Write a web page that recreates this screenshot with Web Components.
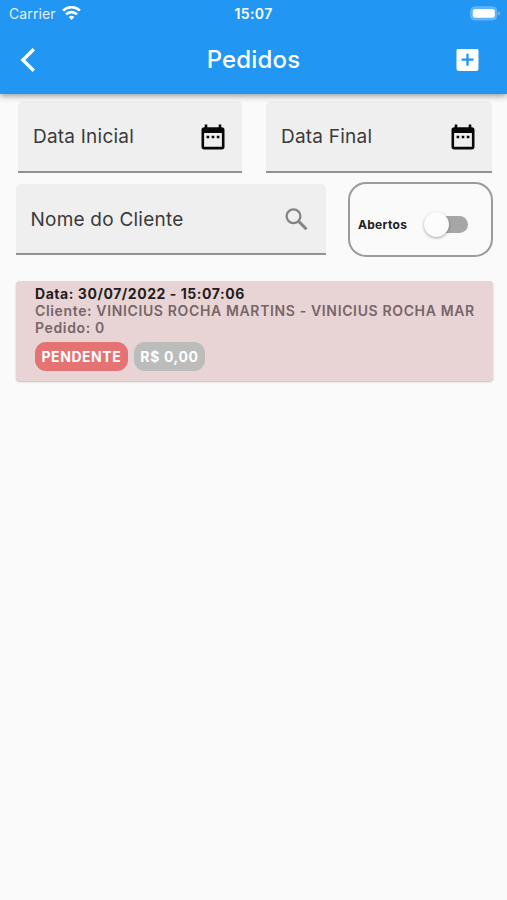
<!DOCTYPE html>
<html lang="pt-BR">
<head>
<meta charset="utf-8">
<title>Pedidos</title>
<style>
html, body { margin: 0; height: 100%; background: #fafafa; overflow: hidden; }
body { font-family: Inter, "Liberation Sans", sans-serif; color: #3a3a3a; }
</style>
</head>
<body>
<orders-page></orders-page>
<script>
const define = (name, html) => customElements.define(name, class extends HTMLElement {
  constructor() {
    super();
    this.attachShadow({ mode: 'open' }).innerHTML = html;
  }
});

define('status-bar', `
<style>
:host { display: grid; grid-template-columns: 1fr auto 1fr; align-items: center; height: 27px; padding: 0 7px 0 9px; box-sizing: border-box; color: #fff; }
.left { display: flex; align-items: center; gap: 6px; font-size: 14px; line-height: 27px; color: #e2f2ff; }
.carrier { letter-spacing: 0.12px; }
.time { font-size: 14px; font-weight: 600; letter-spacing: 0.4px; line-height: 27px; margin-right: 2px; }
.battery { justify-self: end; }
svg { display: block; }
</style>
<div class="left"><span class="carrier">Carrier</span>
<svg width="19" height="15" viewBox="0 0 19 15" fill="none" stroke="#fff" stroke-width="2.700"><path d="M1.100 4.600a12 12 0 0 1 16.800 0"/><path d="M4 8.400a7.800 7.800 0 0 1 11 0"/><path d="M9.500 14 6.600 11.100a4.100 4.100 0 0 1 5.800 0Z" fill="#fff" stroke="none"/></svg></div>
<span class="time">15:07</span>
<svg class="battery" width="30" height="15" viewBox="0 0 30 15"><rect x=".7" y=".9" width="26" height="13" rx="4" fill="#5db1f8" stroke="#6fbaf9"/><rect x="2.800" y="3" width="22" height="8.800" rx="2" fill="#fff"/><path d="M28.200 5.400q1.700.6 1.700 2t-1.700 2z" fill="#78bffa"/></svg>
`);

define('nav-bar', `
<style>
:host { display: grid; grid-template-columns: 1fr auto 1fr; align-items: center; height: 66px; padding: 0 20px; box-sizing: border-box; color: #fff; }
h1 { margin: 0; font-size: 24px; font-weight: 500; line-height: 32px; letter-spacing: 0.15px; }
.add { justify-self: end; margin-right: 8px; }
svg { display: block; }
</style>
<svg width="16" height="25" viewBox="0 0 16 25" fill="none" stroke="#fff" stroke-width="3.400"><path d="M13.800 1.300 2.900 12l10.900 10.700"/></svg>
<h1><slot></slot></h1>
<svg class="add" width="23" height="23" viewBox="0 0 23 23"><rect x=".5" y="-.5" width="22" height="22.500" rx="2.500" fill="#fff"/><path d="M11.500 4.700v12M5.500 10.700h12" stroke="#2196f3" stroke-width="2.300"/></svg>
`);

define('app-header', `
<style>
:host { display: block; height: 94px; background: #2196f3; position: relative; z-index: 1; box-shadow: 0 2px 4px -1px rgba(0,0,0,.2), 0 4px 5px rgba(0,0,0,.13), 0 1px 9px rgba(0,0,0,.1); }
</style>
<status-bar></status-bar>
<nav-bar><slot></slot></nav-bar>
`);

define('filled-field', `
<style>
:host { display: flex; align-items: center; justify-content: space-between; box-sizing: border-box; height: var(--field-height, 71px); padding: var(--drop, 2px) 17px 0 15px; background: #efefef; border-bottom: 2px solid #929292; border-radius: 5px 5px 0 0; font-size: 19px; line-height: 24px; letter-spacing: .22px; }
::slotted(span) { white-space: nowrap; }
</style>
<slot></slot><slot name="icon"></slot>
`);

define('calendar-icon', `
<style>:host { display: block; margin-bottom: 1px; } svg { display: block; }</style>
<svg width="24" height="26" viewBox="0 0 24 26"><path fill="#080808" fill-rule="evenodd" d="M3.700.6h2.600v2.600h11.400V.6h2.600v2.600h.5A2.700 2.700 0 0 1 23.500 5.900v16.800A2.700 2.700 0 0 1 20.800 25.400H3.200A2.700 2.700 0 0 1 .5 22.700V5.900A2.700 2.700 0 0 1 3.200 3.200h.5zM3.100 9.100v13.700h17.800V9.100zM5.600 11.700h2.600v2.500H5.600zM10.700 11.700h2.600v2.500h-2.600zM15.800 11.700h2.600v2.500h-2.600z"/></svg>
`);

define('search-icon', `
<style>:host { display: block; margin-right: 1px; } svg { display: block; }</style>
<svg width="23" height="23" viewBox="0 0 23 23" fill="none" stroke="#858585" stroke-width="2.300"><circle cx="8.500" cy="8.200" r="6.900"/><path d="m13.700 13.400 7.800 7.800" stroke-width="2.900"/></svg>
`);

define('toggle-box', `
<style>
:host { display: flex; align-items: center; justify-content: space-between; box-sizing: border-box; width: 145px; height: 75px; padding: 10px 23px 0 8px; border: 2px solid #9b9b9b; border-radius: 18px; color: #202020; font-size: 12px; font-weight: 700; letter-spacing: 0.3px; }
.track { display: flex; align-items: center; width: 36px; height: 17px; border-radius: 9px; background: #a6a6a6; }
.thumb { flex: none; width: 25px; height: 25px; margin-left: -8px; border-radius: 50%; background: #fcfcfc; box-shadow: 0 1px 3px rgba(0,0,0,.35); }
</style>
<slot></slot><div class="track"><div class="thumb"></div></div>
`);

define('status-chip', `
<style>
:host { display: block; box-sizing: border-box; height: 29px; padding: 0 6.500px; border-radius: 11px; background: var(--chip); color: #fff; font-size: 14px; font-weight: 700; line-height: 29px; letter-spacing: var(--tracking, .55px); white-space: nowrap; }
</style>
<slot></slot>
`);

define('order-card', `
<style>
:host { display: block; box-sizing: border-box; height: 100px; padding: 4px 19px 0 19.500px; border-radius: 4px; background: #e8d4d5; box-shadow: 0 1px 2px rgba(0,0,0,.24); font-size: 14px; font-weight: 600; line-height: 17px; color: #776568; }
.line { overflow: hidden; white-space: nowrap; letter-spacing: .64px; }
.date { color: #241c1d; font-weight: 700; letter-spacing: .55px; }
.chips { display: flex; gap: 6px; margin-top: 6px; }
</style>
<div class="line date"><slot name="date"></slot></div>
<div class="line"><slot name="client"></slot></div>
<div class="line"><slot name="number"></slot></div>
<div class="chips"><slot name="chips"></slot></div>
`);

define('orders-page', `
<style>
:host { display: block; height: 100vh; background: #fafafa; }
main { display: flex; flex-direction: column; padding: 7px 14.500px 0 15.500px; }
.dates { display: grid; grid-template-columns: 223.500px 226px; gap: 24.500px; padding-left: 2.500px; --drop: 2px; --field-height: 72px; }
.filter { display: grid; grid-template-columns: 310.500px 145px; column-gap: 22px; align-items: center; margin-top: 9px; }
order-card { margin: 24px 0 0; }
</style>
<app-header>Pedidos</app-header>
<main>
  <div class="dates">
    <filled-field><span>Data Inicial</span><calendar-icon slot="icon"></calendar-icon></filled-field>
    <filled-field><span>Data Final</span><calendar-icon slot="icon"></calendar-icon></filled-field>
  </div>
  <div class="filter">
    <filled-field><span>Nome do Cliente</span><search-icon slot="icon"></search-icon></filled-field>
    <toggle-box>Abertos</toggle-box>
  </div>
  <order-card>
    <span slot="date">Data: 30/07/2022 - 15:07:06</span>
    <span slot="client">Cliente: VINICIUS ROCHA MARTINS - VINICIUS ROCHA MAR</span>
    <span slot="number">Pedido: 0</span>
    <status-chip slot="chips" style="--chip:#e57373">PENDENTE</status-chip>
    <status-chip slot="chips" style="--chip:#bcbcbb;--tracking:.65px">R$ 0,00</status-chip>
  </order-card>
</main>
`);
</script>
</body>
</html>
